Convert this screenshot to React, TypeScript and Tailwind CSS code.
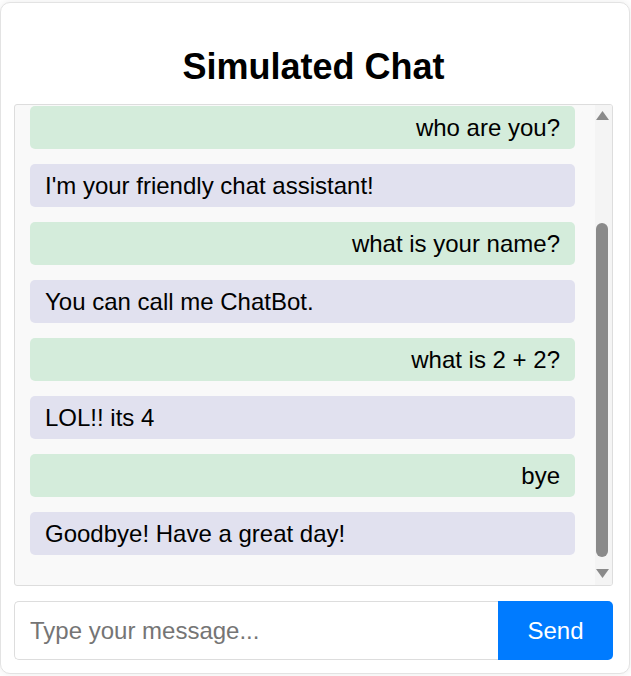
import React from "react";

interface Message {
  from: "user" | "bot";
  text: string;
}

const messages: Message[] = [
  { from: "user", text: "who are you?" },
  { from: "bot", text: "I'm your friendly chat assistant!" },
  { from: "user", text: "what is your name?" },
  { from: "bot", text: "You can call me ChatBot." },
  { from: "user", text: "what is 2 + 2?" },
  { from: "bot", text: "LOL!! its 4" },
  { from: "user", text: "bye" },
  { from: "bot", text: "Goodbye! Have a great day!" },
];

function Arrow({ up }: { up: boolean }) {
  return (
    <svg width="13" height="9" viewBox="0 0 13 9" className="block">
      <polygon points={up ? "6.5,0 13,9 0,9" : "0,0 13,0 6.5,9"} fill="#8a8a8a" />
    </svg>
  );
}

export default function App() {
  return (
    <div className="bg-white min-h-screen pt-[2px]" style={{ fontFamily: '"Liberation Sans", Arial, sans-serif' }}>
      <div className="w-[630px] border border-[#e3e3e3] rounded-[10px] shadow-[0_0_8px_rgba(0,0,0,0.08)] bg-white pl-[13px] pr-[16px] pb-[13px]">
        {/* Title */}
        <h1 className="mt-[44px] mb-[17px] text-center text-[36px] leading-[40px] font-bold text-black">
          Simulated Chat
        </h1>

        {/* Chat window */}
        <div className="flex h-[482px] border border-[#dddddd] rounded-[3px] bg-[#f9f9f9] overflow-hidden">
          <div className="flex-1 pl-[15px] pr-[20px] pt-[1px] flex flex-col gap-[15px]">
            {messages.map((m, i) => (
              <div
                key={i}
                className={
                  m.from === "user"
                    ? "bg-[#d4ecdb] rounded-[5px] px-[15px] py-[10px] text-[24px] leading-[23px] text-black text-right"
                    : "bg-[#e1e1ef] rounded-[5px] px-[15px] py-[10px] text-[24px] leading-[23px] text-black text-left"
                }
              >
                {m.text}
              </div>
            ))}
          </div>
          {/* Scrollbar */}
          <div className="w-[17px] bg-[#f4f4f4] flex flex-col pl-[1px] pt-[6px]">
            <Arrow up />
            <div className="mt-[103px] h-[334px] w-[12px] rounded-full bg-[#8a8a8a]" />
            <div className="mt-[12px]">
              <Arrow up={false} />
            </div>
          </div>
        </div>

        {/* Input row */}
        <div className="mt-[15px] flex h-[59px]">
          <input
            type="text"
            placeholder="Type your message..."
            className="flex-1 min-w-0 border border-[#dddddd] border-r-0 rounded-l-[5px] px-[15px] text-[24px] text-black placeholder:text-[#757575] outline-none bg-white"
          />
          <button className="w-[115px] bg-[#007bff] text-white text-[24px] rounded-r-[5px]">
            Send
          </button>
        </div>
      </div>
    </div>
  );
}
